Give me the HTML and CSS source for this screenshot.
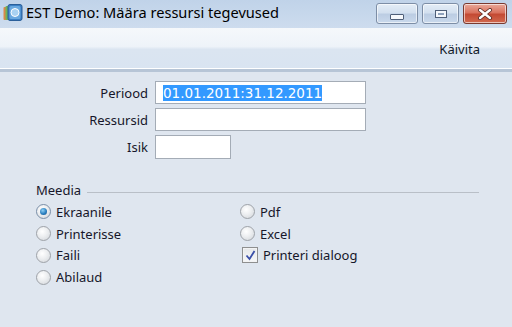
FILE: index.html
```html
<!DOCTYPE html>
<html lang="et">
<head>
<meta charset="utf-8">
<title>EST Demo: Määra ressursi tegevused</title>
<link rel="stylesheet" href="styles.css">
</head>
<body>
<div class="window">
  <div class="titlebar">
    <div class="app-icon">
      <svg width="20" height="18" viewBox="0 0 20 18">
        <rect x="0.5" y="3" width="7" height="13" rx="1" fill="#d9894a"/>
        <rect x="2.5" y="2" width="7" height="14" rx="1" fill="#6fb35a"/>
        <rect x="5" y="0.5" width="14" height="16" rx="2" fill="#3b7fc4" stroke="#2a5f9a" stroke-width="1"/>
        <rect x="6.5" y="2" width="11" height="13" rx="1.5" fill="#6aa9e0"/>
        <circle cx="12" cy="8.5" r="4" fill="#a9d2f2" stroke="#ffffff" stroke-width="1"/>
      </svg>
    </div>
    <div class="title">EST Demo: Määra ressursi tegevused</div>
    <div class="controls">
      <div class="cbtn min"><span class="min-glyph"></span></div>
      <div class="cbtn max"><span class="max-glyph"></span></div>
      <div class="cbtn close">
        <svg width="16" height="12" viewBox="0 0 16 12">
          <path d="M3 2 L13 10 M13 2 L3 10" stroke="#5a2a22" stroke-width="4" stroke-linecap="round"/>
          <path d="M3 2 L13 10 M13 2 L3 10" stroke="#ffffff" stroke-width="2.4" stroke-linecap="round"/>
        </svg>
      </div>
    </div>
  </div>
  <div class="toolbar">
    <span class="run">Käivita</span>
  </div>
  <div class="form">
    <div class="fields">
      <label class="lbl">Periood</label>
      <div class="input wide"><span class="sel">01.01.2011:31.12.2011</span></div>
      <label class="lbl">Ressursid</label>
      <div class="input wide"></div>
      <label class="lbl">Isik</label>
      <div class="input short"></div>
    </div>
    <div class="group">
      <div class="group-head"><span class="group-title">Meedia</span><span class="group-line"></span></div>
      <div class="options">
        <div class="col left">
          <div class="opt"><span class="radio on"></span><span>Ekraanile</span></div>
          <div class="opt"><span class="radio"></span><span>Printerisse</span></div>
          <div class="opt"><span class="radio"></span><span>Faili</span></div>
          <div class="opt"><span class="radio"></span><span>Abilaud</span></div>
        </div>
        <div class="col right">
          <div class="opt"><span class="radio"></span><span>Pdf</span></div>
          <div class="opt"><span class="radio"></span><span>Excel</span></div>
          <div class="opt chk"><span class="checkbox">
            <svg width="11" height="11" viewBox="0 0 11 11"><path d="M1.5 5.5 L4.5 9 L9.5 1" fill="none" stroke="#3a4fa8" stroke-width="1.8"/></svg>
          </span><span>Printeri dialoog</span></div>
        </div>
      </div>
    </div>
  </div>
</div>
</body>
</html>
```

FILE: styles.css
```css
html, body {
  margin: 0;
  padding: 0;
}
body {
  width: 512px;
  height: 327px;
  overflow: hidden;
  background: #dfe6ef;
  font-family: "Noto Sans", "Open Sans", sans-serif;
  color: #16162a;
}
.window {
  display: flex;
  flex-direction: column;
  height: 327px;
}
.titlebar {
  height: 28px;
  display: flex;
  align-items: flex-start;
  background: linear-gradient(#c0d3e9, #cddcee);
}
.app-icon {
  width: 20px;
  height: 18px;
  margin: 4px 0 0 3px;
}
.title {
  margin: 3px 0 0 3px;
  font-size: 14.6px;
  line-height: 19px;
  color: #000;
  flex: 1;
}
.controls {
  display: flex;
  gap: 4px;
  margin: 3px 5px 0 0;
}
.cbtn {
  height: 19px;
  border: 1px solid #7d8ea6;
  border-radius: 3px;
  display: flex;
  align-items: center;
  justify-content: center;
  box-shadow: inset 0 0 0 1px rgba(255,255,255,0.6);
}
.min, .max {
  background: linear-gradient(#e4edf7 0%, #d3e0ef 45%, #bccde3 55%, #c9d9ec 100%);
}
.min { width: 40px; }
.max { width: 35px; }
.close {
  width: 42px;
  border-color: #7a3a30;
  background: linear-gradient(#e9a99a 0%, #d9735f 45%, #c44a33 55%, #d16a50 100%);
}
.min-glyph {
  width: 12px;
  height: 4px;
  margin-top: 6px;
  background: #f6f8fb;
  border: 1px solid #4f5f78;
  border-radius: 1px;
}
.max-glyph {
  width: 10px;
  height: 6px;
  border: 1px solid #4f5f78;
  box-shadow: inset 0 0 0 2px #f4f7fb;
  background: #8fa2bc;
}
.toolbar {
  height: 41px;
  display: flex;
  justify-content: flex-end;
  align-items: center;
  background: linear-gradient(#f5f8fb 0%, #eef3f9 45%, #dbe5f1 52%, #d9e4f1 100%);
  border-bottom: 3px solid #b7c5d6;
  box-shadow: 0 -1px 0 #ffffff inset;
}
.run {
  font-size: 13px;
  margin: 1px 32px 0 0;
  color: #101828;
}
.form {
  flex: 1;
  padding: 9px 0 0 0;
  background: #dfe6ef;
}
.fields {
  display: grid;
  grid-template-columns: 148px auto;
  column-gap: 7px;
  row-gap: 4px;
  align-items: center;
}
.lbl {
  text-align: right;
  font-size: 13px;
}
.input {
  background: #fff;
  border: 1px solid #a4acb6;
  display: flex;
  align-items: center;
  box-sizing: border-box;
  height: 23px;
}
.wide { width: 211px; }
.short { width: 76px; height: 24px; }
.sel {
  margin-left: 7px;
  background: #3399ff;
  color: #fff;
  font-family: "DejaVu Sans", sans-serif;
  font-size: 13.5px;
  line-height: 16px;
}
.group {
  margin: 22px 0 0 36px;
}
.group-head {
  display: flex;
  align-items: center;
  gap: 6px;
}
.group-title {
  font-size: 13px;
}
.group-line {
  width: 392px;
  height: 1px;
  margin-top: 5px;
  background: #b9bfc7;
}
.options {
  display: flex;
  margin-top: 2px;
}
.col {
  display: flex;
  flex-direction: column;
}
.left { width: 204px; }
.opt {
  display: flex;
  align-items: center;
  gap: 5px;
  height: 21.8px;
  font-size: 13px;
}
.radio {
  width: 13px;
  height: 13px;
  border-radius: 50%;
  border: 1px solid #9ea2a8;
  background: radial-gradient(circle at 40% 35%, #ffffff 0%, #eceef0 45%, #cfd3d8 100%);
  box-sizing: content-box;
  position: relative;
}
.radio.on {
  border-color: #7a8fa8;
}
.radio.on::after {
  content: "";
  position: absolute;
  left: 3px;
  top: 3px;
  width: 7px;
  height: 7px;
  border-radius: 50%;
  background: radial-gradient(circle at 40% 35%, #8ed0f5 0%, #2a7fc0 55%, #124e86 100%);
}
.chk { gap: 5px; padding-left: 2px; }
.checkbox {
  width: 14px;
  height: 14px;
  border: 1px solid #8e8f8f;
  background: linear-gradient(#e6e8ea, #f6f7f8);
  display: flex;
  align-items: center;
  justify-content: center;
  box-shadow: inset 0 0 0 1px #f2f3f4;
}
```
